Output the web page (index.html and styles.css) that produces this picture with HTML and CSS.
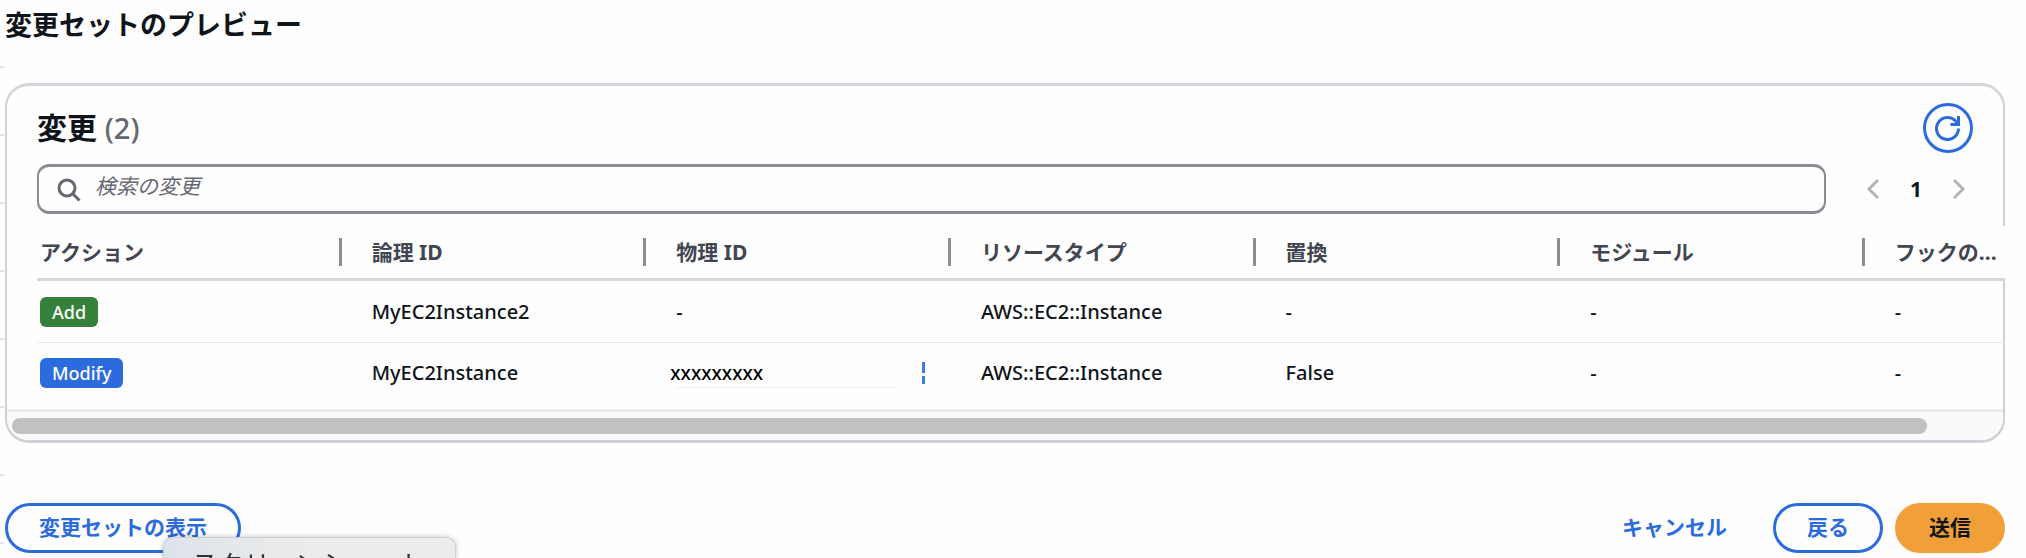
FILE: index.html
```html
<!DOCTYPE html>
<html lang="ja">
<head>
<meta charset="utf-8">
<meta name="viewport" content="width=device-width, initial-scale=1">
<title>変更セットのプレビュー</title>
<link rel="stylesheet" href="styles.css">
</head>
<body>
<main class="page">
  <h1 class="page-title">変更セットのプレビュー</h1>

  <section class="card" aria-labelledby="changes-title">
    <header class="card-header">
      <h2 class="card-title" id="changes-title">変更 <span class="counter">(2)</span></h2>
      <button class="refresh" type="button" aria-label="更新">
        <svg viewBox="0 0 26 26" width="26" height="26" fill="none" stroke="currentColor" stroke-width="3">
          <path d="M23.5 13.5A11 11 0 1 1 21 6.5"/>
          <path d="M23.5 1V9.5H15.5"/>
          <path d="M18 9.5L23.5 4V9.5Z" fill="currentColor" stroke="none"/>
        </svg>
      </button>
    </header>

    <div class="tools">
      <label class="search">
        <svg class="search-icon" viewBox="0 0 24 24" width="24" height="24" fill="none" stroke="currentColor" stroke-width="3">
          <circle cx="10" cy="10" r="8"/>
          <path d="M15.5 15.5L22.5 22.5"/>
        </svg>
        <input class="search-input" type="text" placeholder="検索の変更" aria-label="検索の変更">
      </label>
      <nav class="pagination" aria-label="ページ">
        <button class="page-arrow" type="button" aria-label="前へ">
          <svg viewBox="0 0 14 22" width="14" height="22" fill="none" stroke="currentColor" stroke-width="3"><path d="M12 2L3 11L12 20"/></svg>
        </button>
        <button class="page-number" type="button">1</button>
        <button class="page-arrow" type="button" aria-label="次へ">
          <svg viewBox="0 0 14 22" width="14" height="22" fill="none" stroke="currentColor" stroke-width="3"><path d="M2 2L11 11L2 20"/></svg>
        </button>
      </nav>
    </div>

    <div class="table-wrap">
      <table class="table">
        <thead>
          <tr><th>アクション</th><th>論理 ID</th><th>物理 ID</th><th>リソースタイプ</th><th>置換</th><th>モジュール</th><th class="last">フックの...</th></tr>
        </thead>
        <tbody>
          <tr>
            <td><span class="badge badge-add">Add</span></td>
            <td>MyEC2Instance2</td><td>-</td><td>AWS::EC2::Instance</td><td>-</td><td>-</td><td>-</td>
          </tr>
          <tr>
            <td><span class="badge badge-modify">Modify</span></td>
            <td>MyEC2Instance</td>
            <td class="masked-cell">
              <div class="masked">
                <span class="masked-text">xxxxxxxxx</span>
                <svg viewBox="0 0 3 22" width="3" height="22" fill="currentColor"><path d="M0 0H3V11H0ZM0 14H3V22H0Z"/></svg>
              </div>
            </td>
            <td>AWS::EC2::Instance</td><td>False</td><td>-</td><td>-</td>
          </tr>
        </tbody>
      </table>
    </div>
    <div class="scroll-track"><div class="scroll-thumb"></div></div>
  </section>

  <footer class="actions">
    <button class="btn btn-outline" type="button">変更セットの表示</button>
    <div class="actions-right">
      <button class="btn btn-link" type="button">キャンセル</button>
      <button class="btn btn-outline" type="button">戻る</button>
      <button class="btn btn-primary" type="button">送信</button>
    </div>
  </footer>
</main>
<div class="tooltip" role="tooltip">スクリーンショット</div>
</body>
</html>
```

FILE: styles.css
```css
* {
  box-sizing: border-box;
}

body {
  margin: 0;
  overflow: hidden;
  color: #0f141a;
  background: #fefefe;
  font: 21px/30px "Noto Sans", "Noto Sans CJK JP", sans-serif;
}

button,
input {
  margin: 0;
  padding: 0;
  border: 0;
  background: none;
  color: inherit;
  font: inherit;
}

svg {
  display: block;
  flex: none;
}

.page {
  min-height: 100vh;
  padding: 5px 21px 5px 5px;
  background: repeating-linear-gradient(transparent 0 66px, #e4e4e8 66px 68px) 0 0 / 4px 100% no-repeat;
}

.page-title {
  margin: 0 0 38px;
  font-size: 27px;
  line-height: 40px;
}

.card {
  border: 2px solid #d0d0d8;
  border-top: 3px solid #d5d5db;
  border-bottom-width: 3px;
  border-radius: 24px;
  background: #fefefe;
}

.card-header {
  display: flex;
  align-items: center;
  justify-content: space-between;
  padding: 17px 30px 11px;
}

.card-title {
  margin: 0;
  font-size: 30px;
  line-height: 40px;
}

.counter {
  color: #656871;
  font-size: 29px;
  font-weight: 500;
}

.refresh {
  display: flex;
  align-items: center;
  justify-content: center;
  width: 50px;
  height: 50px;
  border: 3px solid #2c6bdd;
  border-radius: 50%;
  color: #2c6bdd;
}

.tools {
  display: flex;
  align-items: center;
  gap: 40px;
  padding: 0 37px 0 30px;
}

.search {
  display: flex;
  flex: 1;
  align-items: center;
  gap: 14px;
  height: 50px;
  padding: 0 18px;
  border: 3px solid #8c8c94;
  border-width: 3px 2px;
  border-radius: 12px;
}

.search-icon {
  margin-top: 2px;
  color: #656871;
}

.search-input {
  flex: 1;
  height: 42px;
  padding-bottom: 6px;
  outline: 0;
}

.search-input::placeholder {
  color: #656871;
  font-style: italic;
  opacity: 1;
}

.pagination {
  display: flex;
  align-items: center;
  gap: 30px;
}

.page-arrow {
  color: #b4b4bb;
}

.page-number {
  font-weight: 700;
}

.table-wrap {
  margin: 12px -2px 0 30px;
}

.table {
  width: 100%;
  border-collapse: separate;
  border-spacing: 0;
  table-layout: fixed;
}

.table th {
  width: 15.48%;
  height: 55px;
  padding: 0 0 0 30px;
  border-bottom: 3px solid #d5d5db;
  background: #fefefe;
  color: #424650;
  text-align: left;
  white-space: nowrap;
}

.table th:not(.last) {
  background: linear-gradient(#8c8c94, #8c8c94) right 12px / 3px 28px no-repeat #fefefe;
}

.table th.last {
  width: auto;
}

.table td {
  height: 62px;
  padding: 0 0 0 30px;
  border-bottom: 1px solid #e6e6ee;
  font-size: 20px;
  font-weight: 500;
}

.table th:first-child,
.table td:first-child {
  padding-left: 3px;
}

.table tbody tr:last-child td {
  height: 60px;
  border-bottom: 0;
}

.table td.masked-cell {
  padding-left: 24px;
}

.badge {
  display: inline-block;
  padding: 0 12px;
  border-radius: 6px;
  color: #fff;
  font-size: 18px;
}

.badge-add {
  background: #35803a;
}

.badge-modify {
  background: #2c6bdd;
}

.masked {
  display: flex;
  align-items: center;
  justify-content: space-between;
  padding-right: 26px;
  background: linear-gradient(#edf1fb, #edf1fb) 6px 100% / 220px 1px no-repeat;
  color: #3f7ae0;
}

.masked-text {
  color: #000;
  font-size: 19px;
}

.scroll-track {
  margin-top: 6px;
  padding: 6px 76px 6px 5px;
  border-top: 3px solid #ececec;
  border-radius: 0 0 22px 22px;
  background: #fafafa;
}

.scroll-thumb {
  height: 16px;
  border-radius: 8px;
  background: #c1c1c1;
}

.actions {
  display: flex;
  align-items: center;
  justify-content: space-between;
  margin-top: 60px;
}

.actions-right {
  display: flex;
  gap: 12px;
}

.btn {
  height: 50px;
  padding: 0 31px 2px;
  border: 3px solid transparent;
  border-radius: 25px;
  font-weight: 700;
  white-space: nowrap;
}

.btn-outline {
  border-color: #2c6bdd;
  color: #2c6bdd;
}

.btn-link {
  color: #2c6bdd;
}

.btn-primary {
  border-color: #f19f38;
  background: #f19f38;
}

.tooltip {
  position: fixed;
  bottom: 0;
  left: 163px;
  height: 21px;
  overflow: hidden;
  padding: 7px 30px 0 28px;
  border: 1px solid #cfcfcf;
  border-bottom: 0;
  border-radius: 10px 10px 0 0;
  background: linear-gradient(90deg, #dde3ec, #ececea 50%);
  box-shadow: 0 0 5px #00000040;
  color: #333;
  font-size: 26px;
  line-height: 38px;
}
```
